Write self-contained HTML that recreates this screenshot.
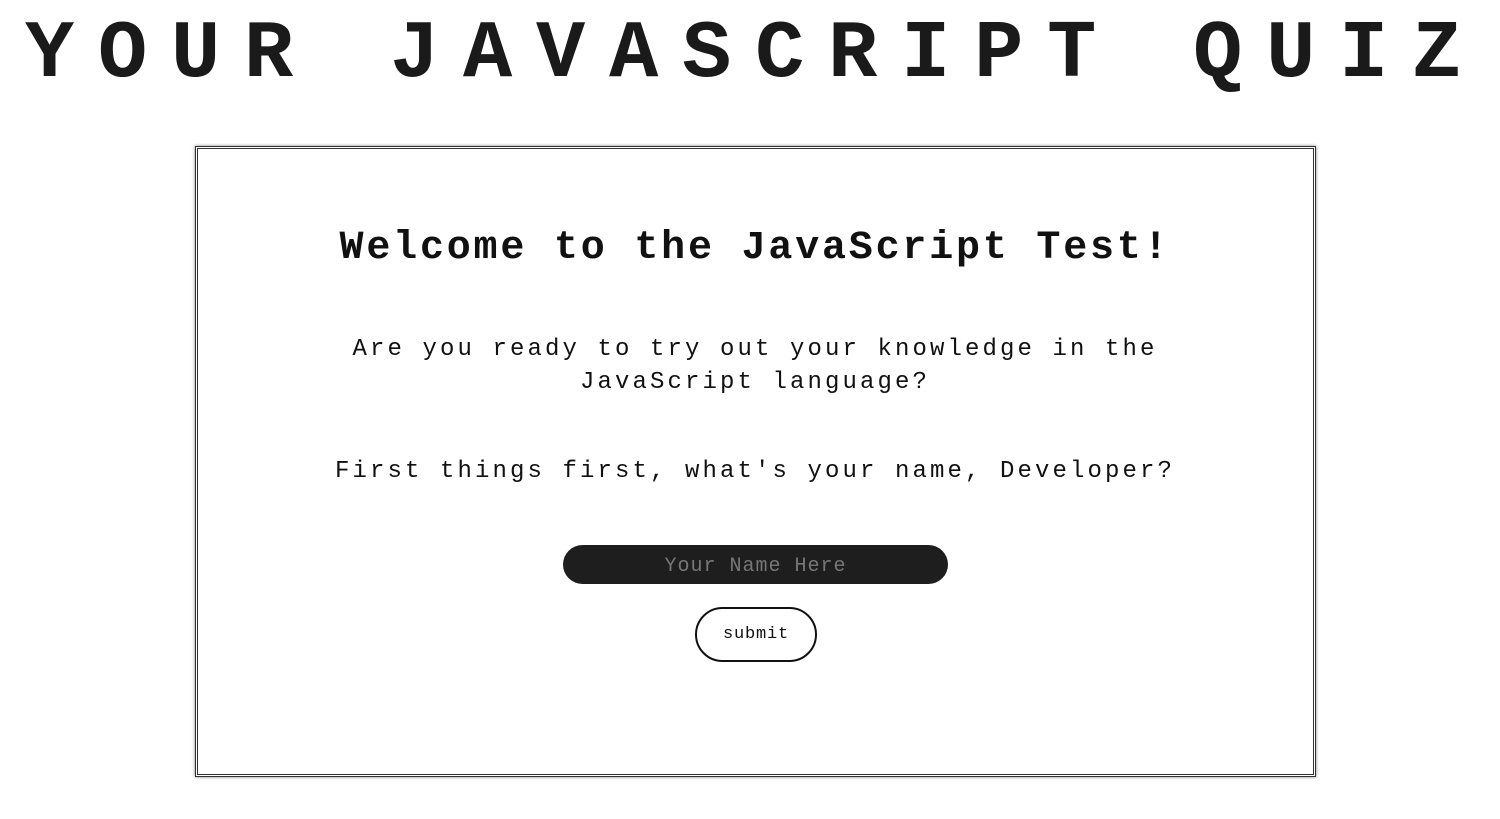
<!DOCTYPE html>
<html><head><style>
body{margin:0;width:1500px;height:819px;background:#fff;font-family:"Liberation Mono",monospace;color:#111;position:relative;overflow:hidden}
.t{position:absolute;left:25px;top:5px;font-size:82px;letter-spacing:23.8px;font-weight:bold;white-space:nowrap;line-height:100px;color:#1a1a1a}
.box{position:absolute;left:195px;top:146px;width:1115px;height:625px;border:3px double #333;box-shadow:0 0 3px rgba(0,0,0,.5)}
.c{position:absolute;left:5px;width:1500px;text-align:center;white-space:nowrap}
h1{margin:0;font-size:40px;letter-spacing:2.8px;font-weight:bold;top:223px;line-height:52px}
.p{font-size:24px;letter-spacing:3.1px;line-height:33px}
.in{position:absolute;left:563px;top:545px;width:385px;height:39px;border-radius:20px;background:#1e1e1e;color:#777;font-size:20px;letter-spacing:1px;text-align:center;line-height:43px}
.btn{position:absolute;left:695px;top:607px;width:118px;height:51px;border:2px solid #111;border-radius:28px;text-align:center;line-height:51px;font-size:17px;letter-spacing:0.8px}
</style></head><body>
<div class="t">YOUR JAVASCRIPT QUIZ</div>
<div class="box"></div>
<h1 class="c">Welcome to the JavaScript Test!</h1>
<div class="c p" style="top:333px">Are you ready to try out your knowledge in the<br>JavaScript language?</div>
<div class="c p" style="top:455px">First things first, what's your name, Developer?</div>
<div class="in">Your Name Here</div>
<div class="btn">submit</div>
</body></html>
